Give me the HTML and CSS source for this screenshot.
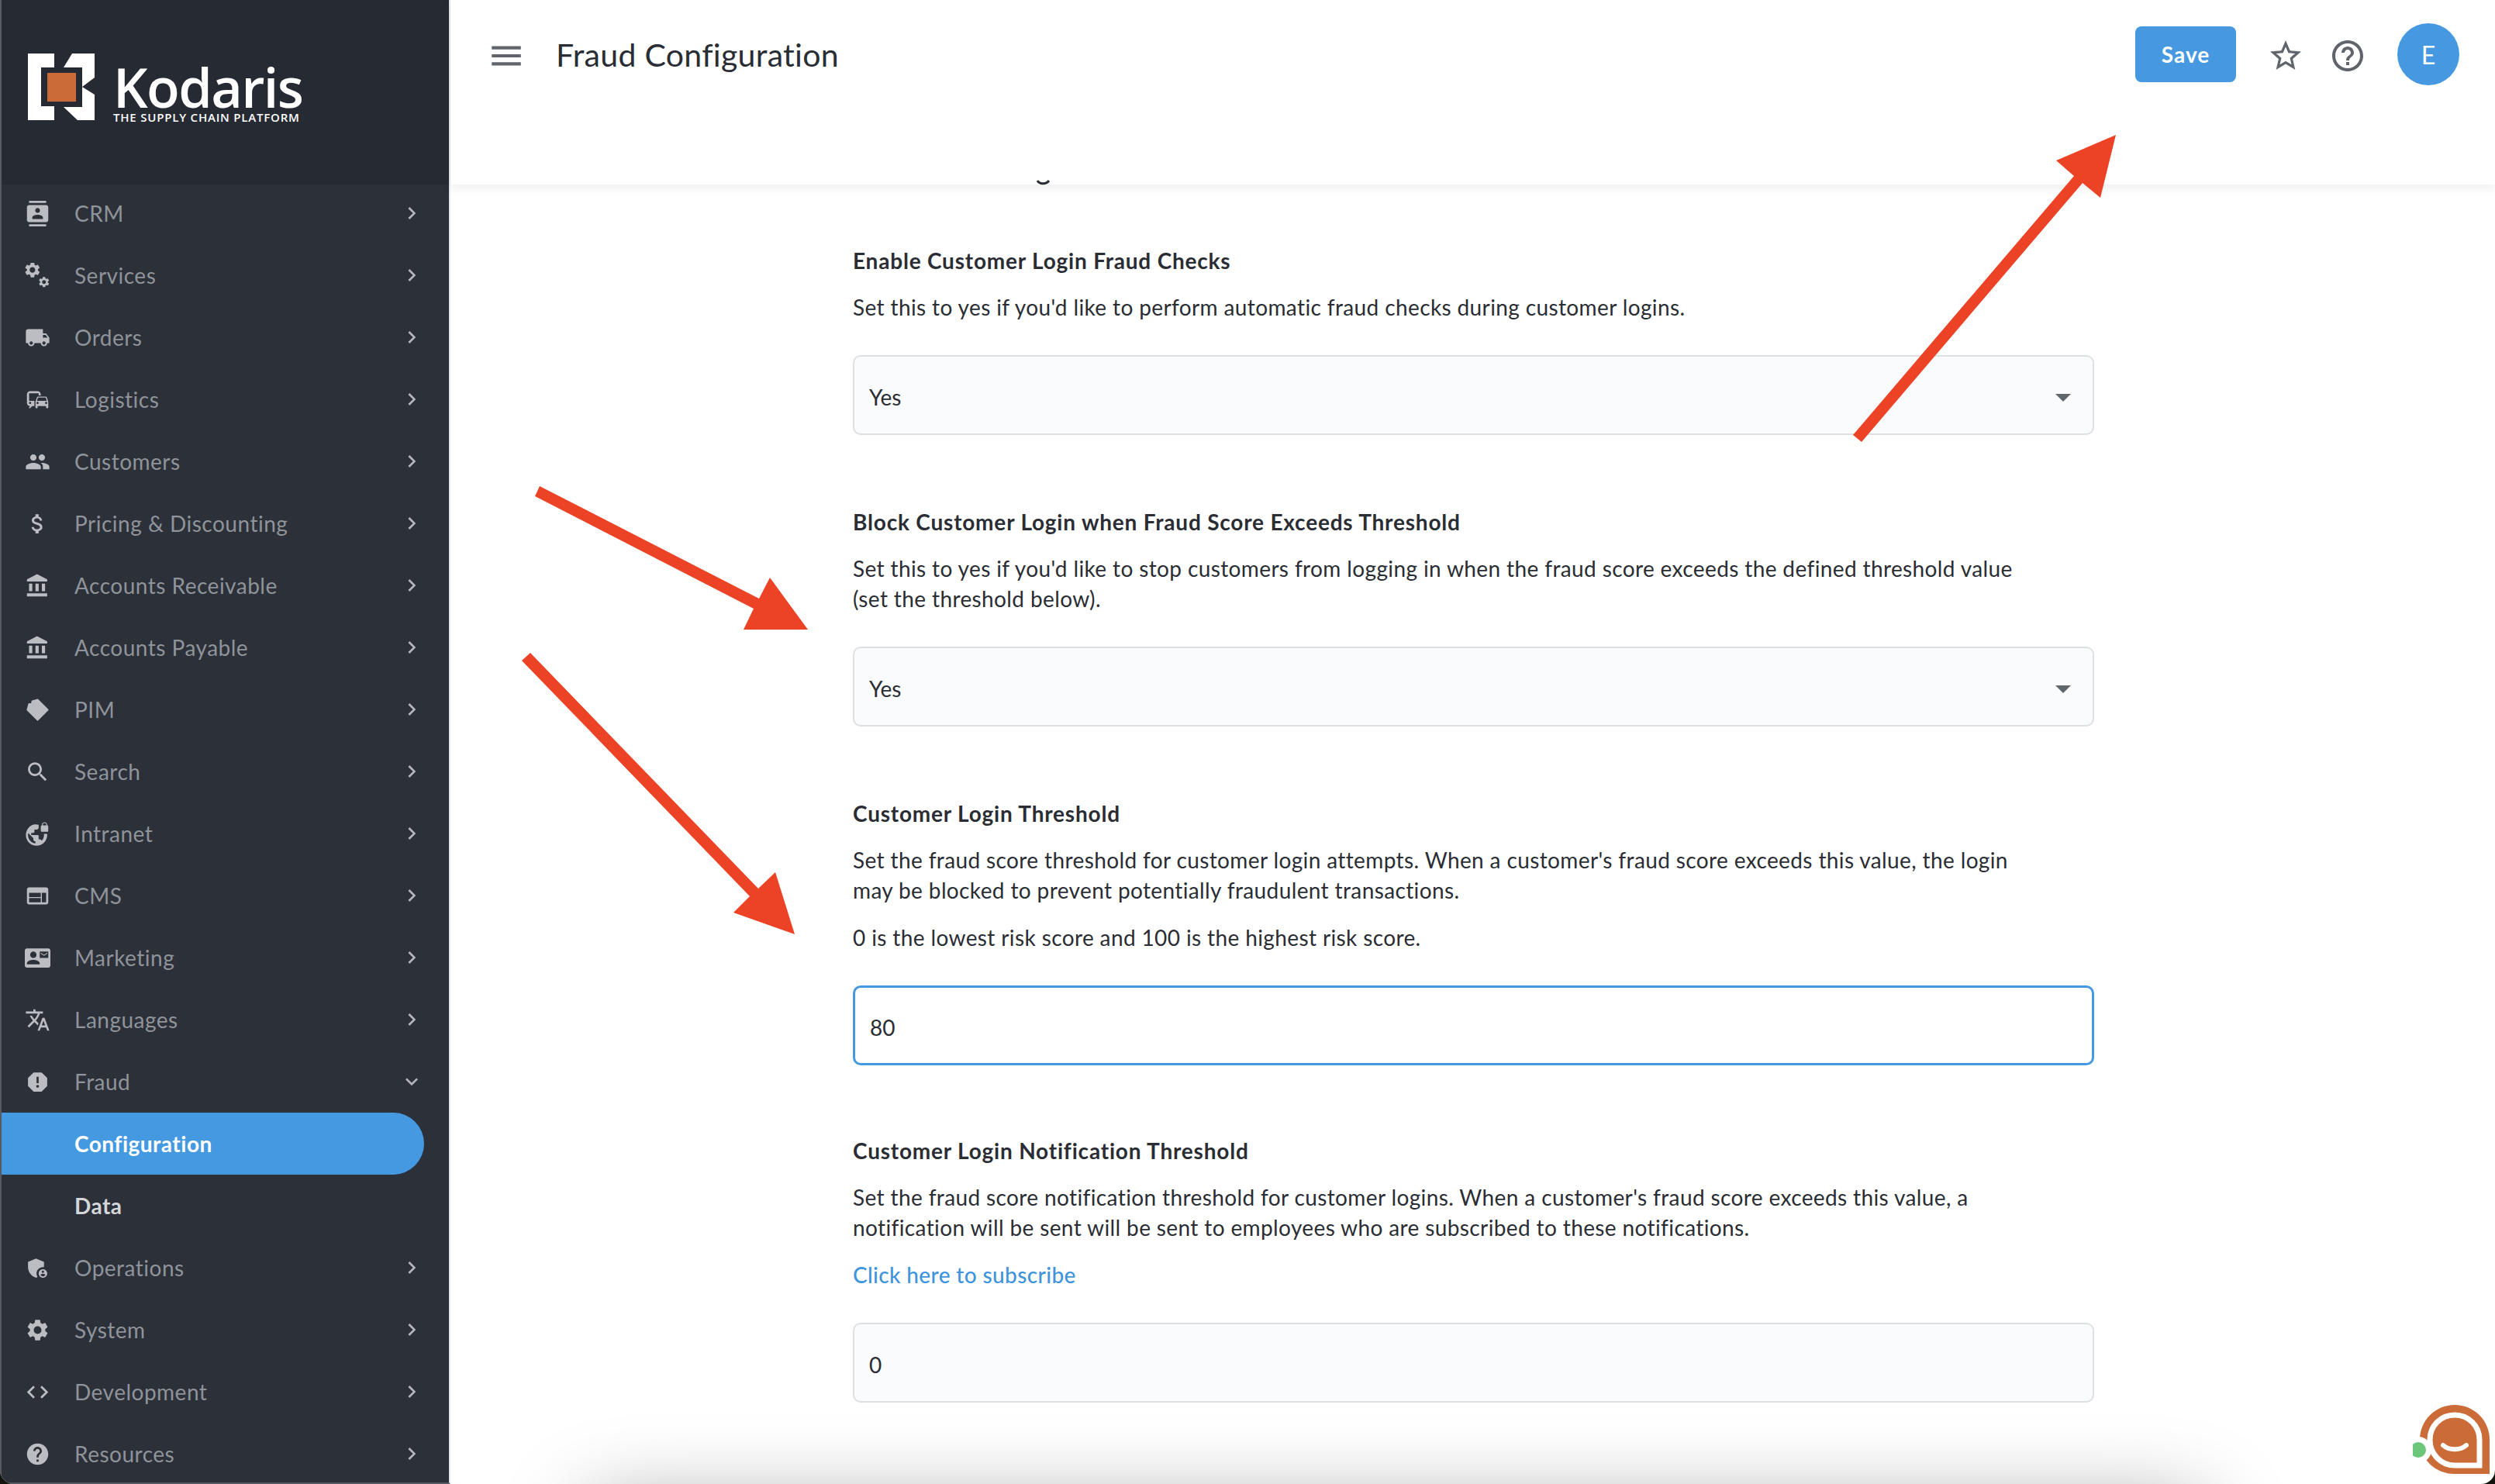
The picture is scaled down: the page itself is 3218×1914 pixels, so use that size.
FILE: index.html
```html
<!DOCTYPE html>
<html lang="en">
<head>
<meta charset="utf-8">
<title>Fraud Configuration</title>
<link rel="stylesheet" href="styles.css">
</head>
<body>
<div class="window">
  <aside class="sidebar">
    <div class="brand">
      <svg class="brand-mark" viewBox="35 69 86 86"><path fill="#fff" d="M35 69H69V87H52V137H69V155H35Z"/><path fill="#fff" d="M92 69H121V100L105 112V87H81Z"/><path fill="#fff" d="M81 138H105V112L121 122V155H99Z"/><rect x="60" y="94" width="37" height="37" fill="#cb6b37"/></svg>
      <div class="brand-text"><div class="brand-name">Kodaris</div><div class="brand-tag">THE SUPPLY CHAIN PLATFORM</div></div>
    </div>
    <nav class="nav">
      <a class="row"><svg class="ico" viewBox="0 0 24 24"><path d="M20 0H4v2h16V0zM4 24h16v-2H4v2zM20 4H4c-1.100 0-2 .9-2 2v12c0 1.100.9 2 2 2h16c1.100 0 2-.9 2-2V6c0-1.100-.9-2-2-2zm-8 2.750c1.240 0 2.250 1.010 2.250 2.250s-1.010 2.250-2.250 2.250S9.750 10.240 9.750 9 10.760 6.750 12 6.750zM17 17H7v-1.500c0-1.670 3.330-2.500 5-2.500s5 .83 5 2.500V17z"/></svg><span class="lbl">CRM</span><svg class="chev" viewBox="0 0 24 24"><path d="M8.590 16.590L13.170 12 8.590 7.410 10 6l6 6-6 6z"/></svg></a>
      <a class="row"><svg class="ico" viewBox="0 0 24 24"><path transform="translate(-1.500 -2) scale(.72)" d="M19.140 12.940c.04-.3.06-.61.06-.94 0-.32-.02-.64-.07-.94l2.030-1.580c.18-.14.23-.41.12-.61l-1.920-3.320c-.12-.22-.37-.29-.59-.22l-2.390.96c-.5-.38-1.030-.7-1.620-.94l-.36-2.540c-.04-.24-.24-.41-.48-.41h-3.840c-.24 0-.43.17-.47.41l-.36 2.540c-.59.24-1.130.57-1.620.94l-2.390-.96c-.22-.08-.47 0-.59.22L2.740 8.870c-.12.21-.08.47.12.61l2.030 1.580c-.05.3-.09.63-.09.94s.02.64.07.94l-2.030 1.580c-.18.14-.23.41-.12.61l1.920 3.320c.12.22.37.29.59.22l2.390-.96c.5.38 1.030.7 1.620.94l.36 2.540c.05.24.24.41.48.41h3.840c.24 0 .44-.17.47-.41l.36-2.540c.59-.24 1.130-.56 1.620-.94l2.390.96c.22.08.47 0 .59-.22l1.920-3.320c.12-.22.07-.47-.12-.61l-2.010-1.580zM12 15.600c-1.980 0-3.600-1.620-3.600-3.600s1.620-3.600 3.600-3.600 3.600 1.620 3.600 3.600-1.620 3.600-3.600 3.600z"/><path transform="translate(12 12) scale(.5)" d="M19.140 12.940c.04-.3.06-.61.06-.94 0-.32-.02-.64-.07-.94l2.030-1.580c.18-.14.23-.41.12-.61l-1.920-3.320c-.12-.22-.37-.29-.59-.22l-2.390.96c-.5-.38-1.030-.7-1.620-.94l-.36-2.540c-.04-.24-.24-.41-.48-.41h-3.840c-.24 0-.43.17-.47.41l-.36 2.540c-.59.24-1.130.57-1.620.94l-2.390-.96c-.22-.08-.47 0-.59.22L2.740 8.870c-.12.21-.08.47.12.61l2.030 1.580c-.05.3-.09.63-.09.94s.02.64.07.94l-2.030 1.580c-.18.14-.23.41-.12.61l1.920 3.320c.12.22.37.29.59.22l2.390-.96c.5.38 1.030.7 1.620.94l.36 2.540c.05.24.24.41.48.41h3.840c.24 0 .44-.17.47-.41l.36-2.540c.59-.24 1.130-.56 1.620-.94l2.390.96c.22.08.47 0 .59-.22l1.920-3.320c.12-.22.07-.47-.12-.61l-2.010-1.580zM12 15.600c-1.980 0-3.600-1.620-3.600-3.600s1.620-3.600 3.600-3.600 3.600 1.620 3.600 3.600-1.620 3.600-3.600 3.600z"/></svg><span class="lbl">Services</span><svg class="chev" viewBox="0 0 24 24"><path d="M8.590 16.590L13.170 12 8.590 7.410 10 6l6 6-6 6z"/></svg></a>
      <a class="row"><svg class="ico" viewBox="0 0 24 24"><path d="M20 8h-3V4H3c-1.100 0-2 .9-2 2v11h2c0 1.660 1.340 3 3 3s3-1.340 3-3h6c0 1.660 1.340 3 3 3s3-1.340 3-3h2v-5l-3-4zM6 18.500c-.83 0-1.500-.67-1.500-1.500s.67-1.500 1.500-1.500 1.500.67 1.500 1.500-.67 1.500-1.500 1.500zm13.500-9l1.960 2.500H17V9.500h2.500zm-1.500 9c-.83 0-1.500-.67-1.500-1.500s.67-1.500 1.500-1.500 1.500.67 1.500 1.500-.67 1.500-1.500 1.500z"/></svg><span class="lbl">Orders</span><svg class="chev" viewBox="0 0 24 24"><path d="M8.590 16.590L13.170 12 8.590 7.410 10 6l6 6-6 6z"/></svg></a>
      <a class="row"><svg class="ico" viewBox="0 0 24 24"><path d="M12 4H5C3.340 4 2 5.340 2 7v8c0 1.660 1.340 3 3 3l-1 1v1h1l2-2.030L9 18v-5H4V5.980L13 6v2h2V7c0-1.660-1.340-3-3-3zM5 14c.55 0 1 .45 1 1s-.45 1-1 1-1-.45-1-1 .45-1 1-1zm15.570-4.340c-.14-.4-.52-.66-.97-.66h-7.190c-.46 0-.83.26-.98.66L10 13.770l.01 5.510c0 .38.31.72.69.72h.62c.38 0 .68-.38.68-.76V18h8v1.240c0 .38.31.76.69.76h.61c.38 0 .69-.34.69-.72l.01-1.370v-4.140l-1.430-4.110zm-8.160.34h7.190l1.030 3h-9.250l1.030-3zM12 16c-.55 0-1-.45-1-1s.45-1 1-1 1 .45 1 1-.45 1-1 1zm8 0c-.55 0-1-.45-1-1s.45-1 1-1 1 .45 1 1-.45 1-1 1z"/></svg><span class="lbl">Logistics</span><svg class="chev" viewBox="0 0 24 24"><path d="M8.590 16.590L13.170 12 8.590 7.410 10 6l6 6-6 6z"/></svg></a>
      <a class="row"><svg class="ico" viewBox="0 0 24 24"><path d="M16 11c1.660 0 2.990-1.340 2.990-3S17.660 5 16 5c-1.660 0-3 1.340-3 3s1.340 3 3 3zm-8 0c1.660 0 2.990-1.340 2.990-3S9.660 5 8 5C6.340 5 5 6.340 5 8s1.340 3 3 3zm0 2c-2.330 0-7 1.170-7 3.500V19h14v-2.500c0-2.330-4.670-3.500-7-3.500zm8 0c-.29 0-.62.02-.97.05 1.160.84 1.970 1.970 1.970 3.450V19h6v-2.500c0-2.330-4.670-3.500-7-3.500z"/></svg><span class="lbl">Customers</span><svg class="chev" viewBox="0 0 24 24"><path d="M8.590 16.590L13.170 12 8.590 7.410 10 6l6 6-6 6z"/></svg></a>
      <a class="row"><svg class="ico" viewBox="0 0 24 24"><path d="M11.800 10.900c-2.270-.59-3-1.200-3-2.150 0-1.090 1.010-1.850 2.700-1.850 1.780 0 2.440.85 2.500 2.100h2.210c-.07-1.720-1.120-3.300-3.210-3.810V3h-3v2.160c-1.940.42-3.500 1.680-3.500 3.610 0 2.310 1.910 3.460 4.700 4.130 2.500.6 3 1.480 3 2.410 0 .69-.49 1.790-2.700 1.790-2.060 0-2.870-.92-2.980-2.100h-2.200c.12 2.190 1.760 3.420 3.680 3.830V21h3v-2.150c1.950-.37 3.500-1.500 3.500-3.550 0-2.840-2.430-3.810-4.700-4.400z"/></svg><span class="lbl">Pricing &amp; Discounting</span><svg class="chev" viewBox="0 0 24 24"><path d="M8.590 16.590L13.170 12 8.590 7.410 10 6l6 6-6 6z"/></svg></a>
      <a class="row"><svg class="ico" viewBox="0 0 24 24"><path d="M4 10v7h3v-7H4zm6 0v7h3v-7h-3zM2 22h19v-3H2v3zm14-12v7h3v-7h-3zm-4.500-9L2 6v2h19V6l-9.500-5z"/></svg><span class="lbl">Accounts Receivable</span><svg class="chev" viewBox="0 0 24 24"><path d="M8.590 16.590L13.170 12 8.590 7.410 10 6l6 6-6 6z"/></svg></a>
      <a class="row"><svg class="ico" viewBox="0 0 24 24"><path d="M4 10v7h3v-7H4zm6 0v7h3v-7h-3zM2 22h19v-3H2v3zm14-12v7h3v-7h-3zm-4.500-9L2 6v2h19V6l-9.500-5z"/></svg><span class="lbl">Accounts Payable</span><svg class="chev" viewBox="0 0 24 24"><path d="M8.590 16.590L13.170 12 8.590 7.410 10 6l6 6-6 6z"/></svg></a>
      <a class="row"><svg class="ico" viewBox="0 0 24 24"><path class="tag" d="M12 2.500L21.500 12L12 21.500L2.500 12L4 6.500L6.500 6.500L7 4Z"/></svg><span class="lbl">PIM</span><svg class="chev" viewBox="0 0 24 24"><path d="M8.590 16.590L13.170 12 8.590 7.410 10 6l6 6-6 6z"/></svg></a>
      <a class="row"><svg class="ico" viewBox="0 0 24 24"><path d="M15.500 14h-.79l-.28-.27C15.410 12.590 16 11.110 16 9.500 16 5.910 13.090 3 9.500 3S3 5.910 3 9.500 5.910 16 9.500 16c1.610 0 3.090-.59 4.230-1.570l.27.28v.79l5 4.990L20.490 19l-4.990-5zm-6 0C7.010 14 5 11.990 5 9.500S7.010 5 9.500 5 14 7.010 14 9.500 11.990 14 9.500 14z"/></svg><span class="lbl">Search</span><svg class="chev" viewBox="0 0 24 24"><path d="M8.590 16.590L13.170 12 8.590 7.410 10 6l6 6-6 6z"/></svg></a>
      <a class="row"><svg class="ico" viewBox="0 0 24 24"><path d="M21 4v-.5C21 2.120 19.880 1 18.500 1S16 2.120 16 3.500V4c-.55 0-1 .45-1 1v4c0 .55.45 1 1 1h5c.55 0 1-.45 1-1V5c0-.55-.45-1-1-1zm-.8 0h-3.400v-.5c0-.94.76-1.700 1.700-1.700s1.700.76 1.700 1.700V4zm-2.280 8c.04.33.08.66.08 1 0 2.080-.8 3.970-2.100 5.390-.26-.81-1-1.390-1.900-1.390h-1v-3c0-.55-.45-1-1-1H6v-2h2c.55 0 1-.45 1-1V8h2c1.100 0 2-.9 2-2V3.460c-.95-.3-1.950-.46-3-.46C5.480 3 1 7.480 1 13s4.480 10 10 10 10-4.480 10-10c0-.34-.02-.67-.05-1h-3.030zM10 20.930c-3.950-.49-7-3.850-7-7.930 0-.62.08-1.210.21-1.790L8 16v1c0 1.100.9 2 2 2v1.930z"/></svg><span class="lbl">Intranet</span><svg class="chev" viewBox="0 0 24 24"><path d="M8.590 16.590L13.170 12 8.590 7.410 10 6l6 6-6 6z"/></svg></a>
      <a class="row"><svg class="ico" viewBox="0 0 24 24"><path d="M20 4H4c-1.100 0-2 .9-2 2v12c0 1.100.9 2 2 2h16c1.100 0 2-.9 2-2V6c0-1.100-.9-2-2-2zm-5 14H4v-4h11v4zm0-5H4V9h11v4zm5 5h-4V9h4v9z"/></svg><span class="lbl">CMS</span><svg class="chev" viewBox="0 0 24 24"><path d="M8.590 16.590L13.170 12 8.590 7.410 10 6l6 6-6 6z"/></svg></a>
      <a class="row"><svg class="ico" viewBox="0 0 24 24"><path d="M21 8V7l-3 2-3-2v1l3 2 3-2zm1-5H2C.9 3 0 3.900 0 5v14c0 1.100.9 2 2 2h20c1.100 0 1.990-.9 1.990-2L24 5c0-1.100-.9-2-2-2zM8 6c1.660 0 3 1.340 3 3s-1.340 3-3 3-3-1.340-3-3 1.340-3 3-3zm6 12H2v-1c0-2 4-3.100 6-3.100s6 1.100 6 3.100v1zm8-6h-8V6h8v6z"/></svg><span class="lbl">Marketing</span><svg class="chev" viewBox="0 0 24 24"><path d="M8.590 16.590L13.170 12 8.590 7.410 10 6l6 6-6 6z"/></svg></a>
      <a class="row"><svg class="ico" viewBox="0 0 24 24"><path d="M12.870 15.070l-2.540-2.510.03-.03c1.740-1.940 2.980-4.170 3.710-6.530H17V4h-7V2H8v2H1v1.990h11.170C11.500 7.920 10.440 9.750 9 11.350 8.070 10.320 7.300 9.190 6.690 8h-2c.73 1.630 1.730 3.170 2.980 4.560l-5.090 5.020L4 19l5-5 3.110 3.110.76-2.040zM18.500 10h-2L12 22h2l1.120-3h4.750L21 22h2l-4.500-12zm-2.620 7l1.620-4.330L19.120 17h-3.240z"/></svg><span class="lbl">Languages</span><svg class="chev" viewBox="0 0 24 24"><path d="M8.590 16.590L13.170 12 8.590 7.410 10 6l6 6-6 6z"/></svg></a>
      <a class="row"><svg class="ico" viewBox="0 0 24 24"><path d="M15.730 3H8.270L3 8.270v7.460L8.270 21h7.460L21 15.730V8.270L15.730 3zM12 17.300c-.72 0-1.300-.58-1.300-1.300 0-.72.58-1.300 1.300-1.300.72 0 1.300.58 1.300 1.300 0 .72-.58 1.300-1.300 1.300zm1-4.300h-2V7h2v6z"/></svg><span class="lbl">Fraud</span><svg class="chev" viewBox="0 0 24 24"><path d="M16.590 8.590L12 13.170 7.410 8.590 6 10l6 6 6-6z"/></svg></a>
      <a class="row sub active"><span class="lbl">Configuration</span></a>
      <a class="row sub"><span class="lbl">Data</span></a>
      <a class="row"><svg class="ico" viewBox="0 0 24 24"><path d="M17 11c.34 0 .67.04 1 .09V6.270L10.500 3 3 6.270v4.910c0 4.540 3.200 8.790 7.500 9.820.55-.13 1.080-.32 1.600-.55-.69-.98-1.100-2.170-1.100-3.450 0-3.310 2.690-6 6-6z"/><path d="M17 13c-2.210 0-4 1.790-4 4s1.790 4 4 4 4-1.790 4-4-1.790-4-4-4zm0 1.380c.62 0 1.120.51 1.120 1.120s-.51 1.120-1.120 1.120-1.120-.51-1.120-1.120.5-1.120 1.120-1.120zm0 5.370c-.93 0-1.740-.46-2.240-1.170.05-.72 1.510-1.080 2.240-1.080s2.190.36 2.240 1.080c-.5.71-1.310 1.170-2.240 1.170z"/></svg><span class="lbl">Operations</span><svg class="chev" viewBox="0 0 24 24"><path d="M8.590 16.590L13.170 12 8.590 7.410 10 6l6 6-6 6z"/></svg></a>
      <a class="row"><svg class="ico" viewBox="0 0 24 24"><path d="M19.140 12.940c.04-.3.06-.61.06-.94 0-.32-.02-.64-.07-.94l2.030-1.580c.18-.14.23-.41.12-.61l-1.920-3.320c-.12-.22-.37-.29-.59-.22l-2.390.96c-.5-.38-1.030-.7-1.620-.94l-.36-2.540c-.04-.24-.24-.41-.48-.41h-3.840c-.24 0-.43.17-.47.41l-.36 2.540c-.59.24-1.130.57-1.620.94l-2.390-.96c-.22-.08-.47 0-.59.22L2.740 8.870c-.12.21-.08.47.12.61l2.030 1.580c-.05.3-.09.63-.09.94s.02.64.07.94l-2.030 1.580c-.18.14-.23.41-.12.61l1.920 3.320c.12.22.37.29.59.22l2.390-.96c.5.38 1.030.7 1.620.94l.36 2.540c.05.24.24.41.48.41h3.840c.24 0 .44-.17.47-.41l.36-2.540c.59-.24 1.130-.56 1.620-.94l2.390.96c.22.08.47 0 .59-.22l1.920-3.320c.12-.22.07-.47-.12-.61l-2.010-1.580zM12 15.600c-1.980 0-3.600-1.620-3.600-3.600s1.620-3.600 3.600-3.600 3.600 1.620 3.600 3.600-1.620 3.600-3.600 3.600z"/></svg><span class="lbl">System</span><svg class="chev" viewBox="0 0 24 24"><path d="M8.590 16.590L13.170 12 8.590 7.410 10 6l6 6-6 6z"/></svg></a>
      <a class="row"><svg class="ico" viewBox="0 0 24 24"><path d="M9.400 16.600L4.800 12l4.600-4.600L8 6l-6 6 6 6 1.400-1.400zm5.200 0l4.600-4.600-4.600-4.600L16 6l6 6-6 6-1.400-1.400z"/></svg><span class="lbl">Development</span><svg class="chev" viewBox="0 0 24 24"><path d="M8.590 16.590L13.170 12 8.590 7.410 10 6l6 6-6 6z"/></svg></a>
      <a class="row"><svg class="ico" viewBox="0 0 24 24"><path d="M12 2C6.480 2 2 6.480 2 12s4.480 10 10 10 10-4.480 10-10S17.520 2 12 2zm1 17h-2v-2h2v2zm2.070-7.750l-.9.92C13.450 12.900 13 13.500 13 15h-2v-.5c0-1.100.45-2.100 1.170-2.830l1.240-1.260c.37-.36.59-.86.59-1.410 0-1.100-.9-2-2-2s-2 .9-2 2H8c0-2.210 1.790-4 4-4s4 1.790 4 4c0 .88-.36 1.680-.93 2.250z"/></svg><span class="lbl">Resources</span><svg class="chev" viewBox="0 0 24 24"><path d="M8.590 16.590L13.170 12 8.590 7.410 10 6l6 6-6 6z"/></svg></a>
    </nav>
  </aside>
  <main class="main">
    <header class="topbar">
      <svg class="menu" viewBox="0 0 24 24"><path d="M3 18h18v-2H3v2zm0-5h18v-2H3v2zm0-7v2h18V6H3z"/></svg>
      <h1 class="title">Fraud Configuration</h1>
      <button class="save">Save</button>
      <svg class="star" viewBox="0 0 24 24"><path d="M22 9.240l-7.190-.62L12 2 9.190 8.630 2 9.240l5.460 4.730L5.820 21 12 17.270 18.180 21l-1.630-7.030L22 9.240zM12 15.400l-3.760 2.270 1-4.280-3.320-2.880 4.380-.38L12 6.100l1.710 4.040 4.380.38-3.320 2.880 1 4.280L12 15.400z"/></svg>
      <svg class="help" viewBox="0 0 24 24"><path d="M11 18h2v-2h-2v2zm1-16C6.480 2 2 6.480 2 12s4.480 10 10 10 10-4.480 10-10S17.520 2 12 2zm0 18c-4.410 0-8-3.590-8-8s3.590-8 8-8 8 3.590 8 8-3.590 8-8 8zm0-14c-2.210 0-4 1.790-4 4h2c0-1.100.9-2 2-2s2 .9 2 2c0 2-3 1.750-3 5h2c0-2.250 3-2.500 3-5 0-2.210-1.790-4-4-4z"/></svg>
      <div class="avatar">E</div>
      <svg class="descender" viewBox="0 0 20 8"><path d="M2 1C5 6 13 6 17 1" fill="none" stroke="#2a2d33" stroke-width="3"/></svg>
    </header>
    <section class="form">
      <h2 class="label">Enable Customer Login Fraud Checks</h2>
      <p class="desc">Set this to yes if you'd like to perform automatic fraud checks during customer logins.</p>
      <div class="field">Yes<svg class="caret" viewBox="0 0 20 10"><path d="M0 0H20L10 10Z"/></svg></div>
      <h2 class="label">Block Customer Login when Fraud Score Exceeds Threshold</h2>
      <p class="desc">Set this to yes if you'd like to stop customers from logging in when the fraud score exceeds the defined threshold value (set the threshold below).</p>
      <div class="field">Yes<svg class="caret" viewBox="0 0 20 10"><path d="M0 0H20L10 10Z"/></svg></div>
      <h2 class="label">Customer Login Threshold</h2>
      <p class="desc">Set the fraud score threshold for customer login attempts. When a customer's fraud score exceeds this value, the login may be blocked to prevent potentially fraudulent transactions.</p>
      <p class="desc">0 is the lowest risk score and 100 is the highest risk score.</p>
      <div class="field focused">80</div>
      <h2 class="label">Customer Login Notification Threshold</h2>
      <p class="desc">Set the fraud score notification threshold for customer logins. When a customer's fraud score exceeds this value, a notification will be sent will be sent to employees who are subscribed to these notifications.</p>
      <p class="desc"><a class="link">Click here to subscribe</a></p>
      <div class="field">0</div>
    </section>
  </main>
  <div class="bottom-shadow"></div>
  <svg class="arrows" viewBox="0 0 3218 1914">
    <polygon points="696,627 690,640 972,785 959,812 1042,812 993,745 979,772"/>
    <polygon points="684,842 673,852 967,1156 946,1177 1025,1205 1000,1125 978,1146"/>
    <polygon points="2390,561 2401,570 2686,236 2709,255 2729,174 2652,207 2675,227"/>
  </svg>
  <div class="chat">
    <svg class="chat-icon" viewBox="0 0 108 100"><path fill="#cb6b37" d="M9 52C9 27 29 7 54 7S99 27 99 52V96H54C29 96 9 77 9 52Z"/><path fill="#cb6b37" stroke="#fff" stroke-width="7" d="M22 52C22 34 36 20 54 20S86 34 86 52V85H54C36 85 22 70 22 52Z"/><path fill="none" stroke="#fff" stroke-width="6" stroke-linecap="round" d="M39 59C47 66 61 66 69 59"/><circle cx="7" cy="65" r="17" fill="#fff"/><circle cx="7" cy="65" r="10" fill="#6cc77b"/></svg>
  </div>
</div>
</body>
</html>
```

FILE: styles.css
```css
* { box-sizing: border-box; }
html, body { margin: 0; padding: 0; background: #14140e; }
body { width: 3218px; height: 1914px; overflow: hidden; font-family: "Lato", "Open Sans", sans-serif; }
.window { position: relative; display: flex; width: 3218px; height: 1914px; overflow: hidden; border-radius: 0 0 18px 18px; background: #fff; }

.sidebar { width: 581px; flex: none; display: flex; flex-direction: column; background: #2c3039; border-left: 2px solid #565a62; border-right: 2px solid #e8ebee; border-bottom: 2px solid #565a62; overflow: hidden; }
.brand { height: 238px; flex: none; background: #262a33; display: flex; align-items: flex-start; gap: 24px; padding: 69px 0 0 34px; }
.brand-mark { width: 86px; height: 86px; flex: none; }
.brand-text { color: #fff; font-family: "Open Sans", sans-serif; }
.brand-name { font-size: 70px; line-height: 62px; margin-top: 12px; letter-spacing: -1.600px; font-weight: 600; }
.brand-tag { font-size: 15px; line-height: 14px; font-weight: 600; letter-spacing: .8px; margin-top: 1px; white-space: nowrap; }

.nav { display: flex; flex-direction: column; margin-top: -3px; }
.row { height: 80px; flex: none; display: flex; align-items: center; padding-left: 30px; color: #8f939a; font-size: 28px; }
.ico { width: 33px; height: 33px; flex: none; fill: #bbbdc2; }
.tag { stroke: #bbbdc2; stroke-width: 1.500; stroke-linejoin: round; }
.lbl { margin-left: 31px; white-space: nowrap; letter-spacing: .5px; }
.chev { width: 32px; height: 32px; fill: #b4b6bb; margin-left: auto; margin-right: 32px; }
.sub { padding-left: 94px; font-weight: 700; color: #d5d6d9; }
.sub .lbl { margin-left: 0; }
.active { width: 545px; color: #fff; background: #4599e0; border-radius: 0 40px 40px 0; }

.main { flex: 1; min-width: 0; display: flex; flex-direction: column; color: #2a2d33; }
.topbar { position: relative; height: 238px; flex: none; display: flex; align-items: flex-start; padding: 34px 46px 0 47px; background: #fff; box-shadow: 0 4px 14px rgba(0, 0, 0, .08); z-index: 1; }
.menu { width: 50px; height: 50px; margin-top: 13px; fill: #60646b; flex: none; }
.title { margin: 7px 0 0 39px; font-size: 41px; line-height: 60px; font-weight: 400; letter-spacing: .3px; }
.save { margin-left: auto; width: 130px; height: 72px; border: 0; border-radius: 8px; background: #4699e1; color: #fff; font: 700 28px "Lato", sans-serif; letter-spacing: 1px; }
.star { width: 48px; height: 48px; margin: 14px 0 0 40px; fill: #60646b; }
.help { width: 48px; height: 48px; margin: 14px 0 0 32px; fill: #60646b; }
.avatar { width: 80px; height: 80px; margin: -4px 0 0 40px; border-radius: 50%; background: #4699e1; color: #fff; font-size: 32px; display: flex; align-items: center; justify-content: center; }
.descender { position: absolute; left: 755px; top: 232px; width: 20px; height: 8px; }

.form { width: 2120px; padding: 79px 0 0 519px; }
.label { margin: 0; font-size: 28px; line-height: 38px; font-weight: 700; letter-spacing: .8px; }
.desc { margin: 22px 0 0; font-size: 28px; line-height: 39px; padding-right: 92px; letter-spacing: .38px; }
.field { position: relative; display: flex; align-items: center; height: 103px; margin: 42px 0 93px; padding: 4px 19px 0; border: 2px solid #dfe0e2; border-radius: 10px; background: #fafbfd; font-size: 28px; }
.focused { margin-bottom: 91px; border: 3px solid #4599e0; background: #fff; }
.caret { position: absolute; right: 28px; top: 48px; width: 20px; height: 10px; fill: #60646b; }
.link { color: #3f94dc; font-weight: 500; }

.bottom-shadow { position: absolute; left: 760px; width: 2080px; top: 1945px; height: 100px; box-shadow: 0 0 110px rgba(0, 0, 0, .4); }
.arrows { position: absolute; inset: 0; width: 3218px; height: 1914px; fill: #ec4326; z-index: 2; pointer-events: none; }
.chat { position: absolute; right: 0; bottom: 0; z-index: 2; }
.chat-icon { display: block; width: 108px; height: 100px; margin: 0 -2px 9px 0; }
```
